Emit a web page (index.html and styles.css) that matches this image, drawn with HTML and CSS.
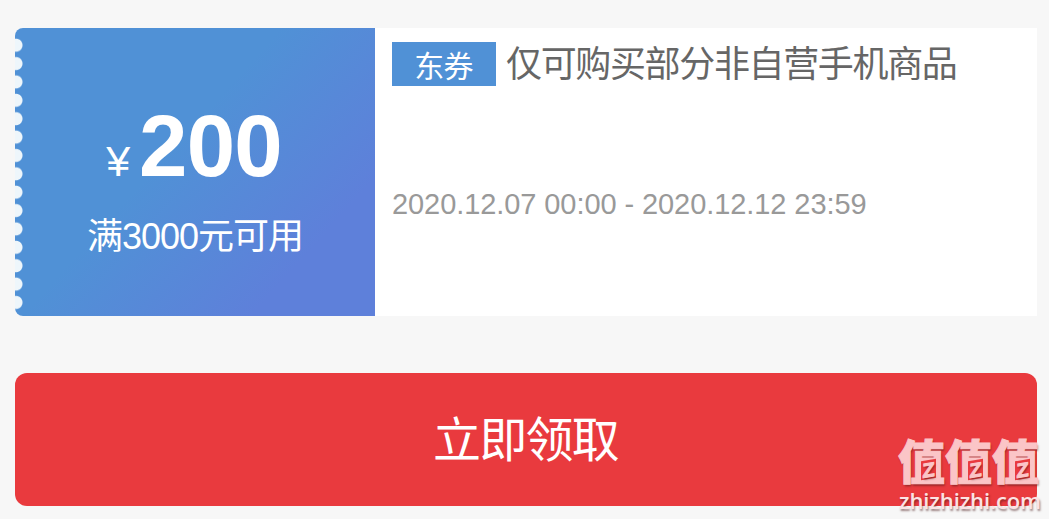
FILE: index.html
```html
<!DOCTYPE html>
<html lang="zh-CN">
<head>
    <meta charset="UTF-8">
    <meta name="viewport" content="width=device-width, initial-scale=1.0">
    <title>领取优惠券</title>
    <link rel="stylesheet" href="styles.css">
</head>
<body>

    <!-- 优惠券 -->
    <div class="coupon">
        <div class="coupon-left">
            <div class="price"><span class="yen">¥</span><strong>200</strong></div>
            <div class="limit">满3000元可用</div>
        </div>
        <div class="coupon-right">
            <div class="title"><span class="tag">东券</span><span class="name">仅可购买部分非自营手机商品</span></div>
            <div class="date">2020.12.07 00:00 - 2020.12.12 23:59</div>
        </div>
    </div>

    <button class="get-button">立即领取</button>

    <!-- 右下角水印 -->
    <div class="watermark">
        <div class="mark-name"><span>值</span><span>值</span><span>值</span></div>
        <div class="mark-site">zhizhizhi.com</div>
    </div>

</body>
</html>
```
FILE: styles.css
```css
body {
    margin: 0;
    padding: 28px 12px 0 15px;
    height: 519px;
    box-sizing: border-box;
    overflow: hidden;
    position: relative;
    background-color: #f7f7f7;
    font-family: "Liberation Sans", "Noto Sans CJK SC", sans-serif;
}

/* 优惠券 */
.coupon {
    display: flex;
    height: 288px;
    border-radius: 8px 0 0 8px;
    background-color: white;
    overflow: hidden;
}

.coupon-left {
    position: relative;
    width: 360px;
    box-sizing: border-box;
    padding-top: 74px;
    color: white;
    text-align: center;
    background: linear-gradient(132deg, #5091d6 43%, #5e80da 80%);
}

/* 左侧锯齿 */
.coupon-left::before {
    content: "";
    position: absolute;
    left: 0;
    top: 7.8px;
    bottom: 4px;
    width: 9px;
    background: radial-gradient(circle at 1px 9.2px, #eef6fb 6px, transparent 7px) 0 0 / 9px 18.38px repeat-y;
}

.price {
    height: 88px;
    line-height: 88px;
    padding-right: 2px;
    white-space: nowrap;
}

.yen {
    font-size: 43px;
    margin-right: 9px;
}

.price strong {
    font-size: 87px;
    letter-spacing: -0.8px;
}

.limit {
    margin-top: 22px;
    height: 50px;
    line-height: 50px;
    font-size: 36px;
    letter-spacing: -1px;
}

.coupon-right {
    flex: 1;
    padding: 14px 0 0 17px;
}

.title {
    display: flex;
    height: 44px;
    line-height: 46px;
}

.tag {
    width: 104px;
    height: 44px;
    text-align: center;
    font-size: 30px;
    line-height: 49px;
    letter-spacing: -0.7px;
    text-indent: -1px;
    color: white;
    background-color: #5091d6;
}

.name {
    margin-left: 10px;
    font-size: 36px;
    letter-spacing: -1.35px;
    color: #666;
}

.date {
    margin-top: 101px;
    font-size: 29px;
    line-height: 34px;
    letter-spacing: -0.08px;
    color: #999;
}

/* 领取按钮 */
.get-button {
    display: block;
    width: 100%;
    height: 133px;
    margin-top: 57px;
    padding: 0 1px 8px 0;
    border: none;
    border-radius: 12px;
    background-color: #e93a3e;
    color: white;
    font-family: inherit;
    font-size: 48px;
    letter-spacing: -1.7px;
    cursor: pointer;
}

/* 水印 */
.watermark {
    position: absolute;
    left: 898px;
    top: 435px;
    width: 146px;
    color: #fbc5c7;
    text-shadow: 1px 2px 2px rgba(70, 20, 20, 0.5);
}

.mark-name {
    display: flex;
    height: 54px;
    line-height: 56px;
    font-size: 47px;
    font-weight: 900;
    -webkit-text-stroke: 1px #fbc5c7;
}

.mark-name span {
    position: relative;
    width: 47px;
}

/* 字中间的 z */
.mark-name span::after {
    content: "Z";
    position: absolute;
    left: 23px;
    top: 25px;
    width: 15px;
    height: 19px;
    line-height: 20px;
    font-size: 20px;
    font-weight: 700;
    text-align: center;
    background-color: #e93a3e;
    transform: skewY(-10deg);
}

.mark-site {
    font-family: "Open Sans", sans-serif;
    font-size: 22px;
    font-weight: 600;
    line-height: 22px;
    letter-spacing: -0.1px;
    padding-left: 1px;
    color: #fbe3e4;
}
```
